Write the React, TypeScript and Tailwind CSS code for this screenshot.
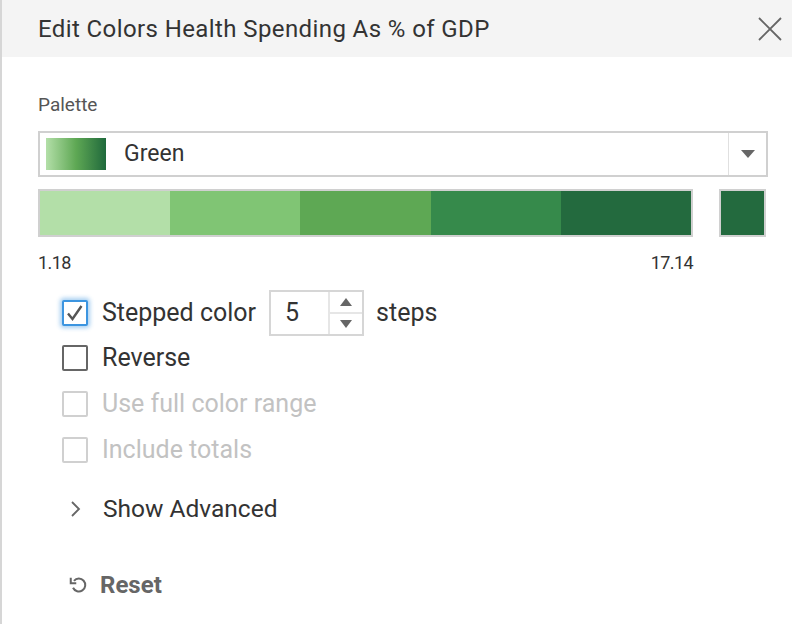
import React from "react";

const font = { fontFamily: "Roboto, 'Noto Sans', sans-serif" };

function Check({ checked, focused, disabled, label }: { checked?: boolean; focused?: boolean; disabled?: boolean; label: string }) {
  return (
    <div className="flex items-center h-[26px]">
      <div
        className={
          "w-[26px] h-[26px] flex items-center justify-center border-2 rounded-[2px] bg-white shrink-0 " +
          (focused ? "border-[#3c95e0] shadow-[0_0_4px_2px_rgba(60,149,224,0.45)]" : disabled ? "border-[#d0d0d0]" : "border-[#666]")
        }
      >
        {checked && (
          <svg width="20" height="20" viewBox="0 0 20 20">
            <path d="M3 10.5 L7.5 16 L16.5 3" fill="none" stroke="#555" strokeWidth="2.4" />
          </svg>
        )}
      </div>
      <span className={"ml-[14px] text-[25px] whitespace-nowrap " + (disabled ? "text-[#c2c2c2]" : "text-[#333]")}>{label}</span>
    </div>
  );
}

export default function App() {
  const segs = ["#b3dfa8", "#80c574", "#5ea854", "#368a4b", "#236a3e"];
  return (
    <div className="w-[792px] h-[624px] bg-white border-l-2 border-[#d6d6d6] flex flex-col overflow-hidden" style={font}>
      <div className="h-[57px] bg-[#f4f4f4] flex items-center justify-between pl-[36px] pr-[10px] shrink-0">
        <span className="text-[24px] text-[#333] tracking-[0.4px] whitespace-nowrap">Edit Colors Health Spending As % of GDP</span>
        <svg width="24" height="24" viewBox="0 0 24 24">
          <path d="M1 1 L23 23 M23 1 L1 23" stroke="#666" strokeWidth="1.8" />
        </svg>
      </div>
      <div className="pl-[36px] pr-[24px] pt-[36px] flex flex-col">
        <div className="text-[19px] text-[#555] leading-[24px]">Palette</div>
        <div className="mt-[14px] h-[46px] border-2 border-[#d0d0d0] flex items-center">
          <div className="ml-[6px] w-[60px] h-[32px] bg-gradient-to-r from-[#b3dfa8] via-[#5ea854] to-[#1f6a3c]" />
          <span className="ml-[18px] text-[23px] text-[#333]">Green</span>
          <div className="flex-1" />
          <div className="w-[38px] h-full border-l border-[#e0e0e0] flex items-center justify-center">
            <svg width="14" height="9" viewBox="0 0 14 9">
              <path d="M0 0 L14 0 L7 8 Z" fill="#666" />
            </svg>
          </div>
        </div>
        <div className="mt-[12px] flex items-start">
          <div className="w-[655px]">
            <div className="h-[48px] border-2 border-[#d0d0d0] flex">
              {segs.map((c) => (
                <div key={c} className="flex-1" style={{ backgroundColor: c }} />
              ))}
            </div>
            <div className="flex justify-between mt-[16px] text-[18px] text-[#333] tracking-[-0.6px] leading-[20px]">
              <span>1.18</span>
              <span>17.14</span>
            </div>
          </div>
          <div className="ml-[26px] w-[47px] h-[48px] border-2 border-[#d0d0d0] bg-[#236a3e]" />
        </div>
        <div className="pl-[24px] mt-[17px] flex flex-col">
          <div className="flex items-center h-[46px]">
            <Check checked focused label="Stepped color" />
            <div className="ml-[13px] w-[95px] h-[46px] border-2 border-[#d6d6d6] flex">
              <div className="flex-1 flex items-center pl-[14px] text-[25px] text-[#333]">5</div>
              <div className="w-[34px] border-l-2 border-[#e6e6e6] flex flex-col">
                <div className="flex-1 flex items-center justify-center border-b-2 border-[#e6e6e6]">
                  <svg width="12" height="8" viewBox="0 0 12 8"><path d="M0 8 L12 8 L6 0 Z" fill="#666" /></svg>
                </div>
                <div className="flex-1 flex items-center justify-center">
                  <svg width="12" height="8" viewBox="0 0 12 8"><path d="M0 0 L12 0 L6 8 Z" fill="#666" /></svg>
                </div>
              </div>
            </div>
            <span className="ml-[12px] text-[25px] text-[#333]">steps</span>
          </div>
          <div className="mt-[9px] flex flex-col gap-[20px]">
            <Check label="Reverse" />
            <Check disabled label="Use full color range" />
            <Check disabled label="Include totals" />
          </div>
          <div className="mt-[33px] flex items-center h-[26px]">
            <svg width="12" height="20" viewBox="0 0 12 20" className="ml-[8px]">
              <path d="M2 3 L9 10 L2 17" fill="none" stroke="#666" strokeWidth="1.8" />
            </svg>
            <span className="ml-[21px] text-[24.5px] text-[#333]">Show Advanced</span>
          </div>
          <div className="mt-[50px] flex items-center h-[26px]">
            <svg width="22" height="22" viewBox="0 0 24 24" className="ml-[6px]">
              <path d="M6.5 7.5 A7 7 0 1 1 5.5 15" fill="none" stroke="#666" strokeWidth="2.2" />
              <path d="M3 4 L3 10 L9 10" fill="none" stroke="#666" strokeWidth="2.2" />
            </svg>
            <span className="ml-[10px] text-[24px] font-bold text-[#666]">Reset</span>
          </div>
        </div>
      </div>
    </div>
  );
}
